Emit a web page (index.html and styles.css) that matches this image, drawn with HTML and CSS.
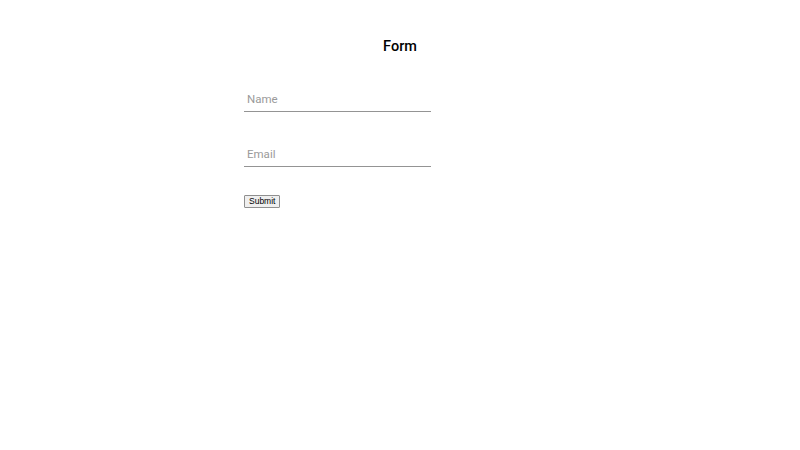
FILE: index.html
```html
<!DOCTYPE html>
<html lang="en">
<head>
<meta charset="utf-8">
<title>Form</title>
<link rel="stylesheet" href="styles.css">
</head>
<body>
  <h1 class="title">Form</h1>
  <form class="form">
    <div class="field"><input class="input" type="text" placeholder="Name"></div>
    <div class="field field-email"><input class="input" type="email" placeholder="Email"></div>
    <button class="submit" type="button">Submit</button>
  </form>
</body>
</html>
```
FILE: styles.css
```css
html, body {
  margin: 0;
  padding: 0;
  background: #ffffff;
}
body {
  font-family: Roboto, "Liberation Sans", sans-serif;
  color: #000;
}
.title {
  margin: 37px 0 0 0;
  height: 20px;
  line-height: 20px;
  font-size: 14.5px;
  font-weight: 500;
  text-align: center;
}
.form {
  width: 312px;
  margin: 31px auto 0 auto;
  display: flex;
  flex-direction: column;
  align-items: flex-start;
}
.field {
  width: 187px;
  border-bottom: 1px solid rgba(0, 0, 0, 0.42);
}
.field-email {
  margin-top: 31px;
}
.input {
  display: block;
  box-sizing: border-box;
  width: 100%;
  height: 23px;
  margin: 0;
  padding: 4px 2px 6px 3px;
  border: 0;
  outline: none;
  background: transparent;
  font-family: Roboto, sans-serif;
  font-size: 11.5px;
  line-height: 13px;
  color: #222;
}
.input::placeholder {
  color: #9a9a9a;
  opacity: 1;
}
.submit {
  margin-top: 28px;
  box-sizing: border-box;
  height: 13px;
  padding: 0 4px;
  border: 1px solid #8f8f8f;
  border-radius: 1px;
  background: #efefef;
  font-family: "Liberation Sans", Arial, sans-serif;
  font-size: 8.5px;
  line-height: 11px;
  color: #000;
}
```
